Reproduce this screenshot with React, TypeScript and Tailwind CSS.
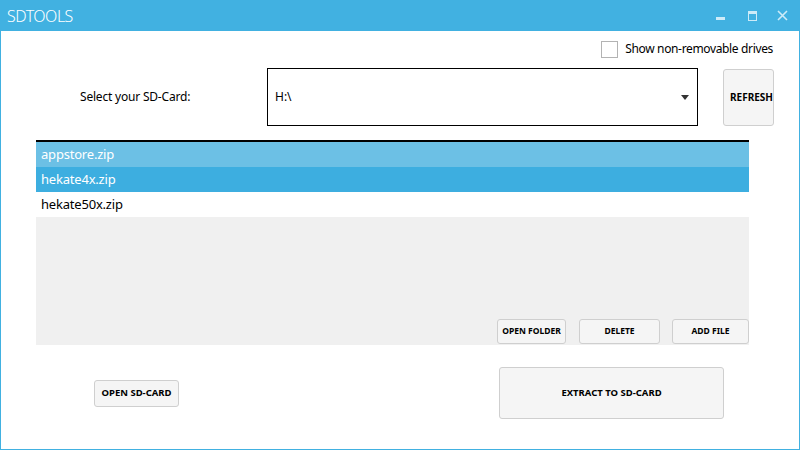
import React from "react";

const files = [
  { name: "appstore.zip", cls: "bg-[#6cc0e5] text-white" },
  { name: "hekate4x.zip", cls: "bg-[#3daee0] text-white" },
  { name: "hekate50x.zip", cls: "bg-white text-black" },
];

function SmallButton({ label, className }: { label: string; className: string }) {
  return (
    <button
      className={`flex items-center justify-center rounded-[3px] border border-[#cfcfcf] bg-[#f5f5f5] text-[8.5px] font-bold text-black ${className}`}
    >
      {label}
    </button>
  );
}

export default function App() {
  return (
    <div
      className="flex h-[450px] w-[800px] flex-col border border-t-0 border-[#41b1e1] bg-white text-[12px] text-black"
      style={{ fontFamily: '"Noto Sans", "Open Sans", sans-serif' }}
    >
      {/* Title bar */}
      <div className="-mx-px flex h-[31px] shrink-0 items-center bg-[#41b1e1] pl-[7px] text-white">
        <span className="text-[16px] font-light tracking-[-0.5px]">SDTOOLS</span>
        <div className="ml-auto flex items-center">
          <div className="flex w-[32px] justify-center pt-[6px]">
            <div className="h-[3px] w-[9px] bg-[#cdebf8]" />
          </div>
          <div className="flex w-[32px] justify-center">
            <div className="h-[10px] w-[9px] border border-t-[3px] border-[#cdebf8]" />
          </div>
          <div className="flex w-[32px] justify-center pr-[4px]">
            <svg width="11" height="11" viewBox="0 0 11 11">
              <path d="M1 1 L10 10 M10 1 L1 10" stroke="#cdebf8" strokeWidth="1.6" />
            </svg>
          </div>
        </div>
      </div>

      {/* Checkbox row */}
      <div className="mt-[9px] flex items-center justify-end pr-[26px]">
        <div className="h-[17px] w-[17px] border border-[#b3b3b3] bg-white" />
        <span className="ml-[7px] tracking-[-0.35px]">Show non-removable drives</span>
      </div>

      {/* SD card select row */}
      <div className="mt-[10px] flex h-[58px] items-center">
        <span className="ml-[79px] w-[187px] tracking-[-0.2px]">Select your SD-Card:</span>
        <div className="flex h-[58px] w-[431px] items-center border-[1.5px] border-black pl-[7px] pr-[8px]">
          <span>H:\</span>
          <svg className="ml-auto" width="8" height="5" viewBox="0 0 8 5">
            <path d="M0 0 H8 L4 5 Z" fill="#333" />
          </svg>
        </div>
        <button className="ml-[25px] flex h-[57px] w-[51px] items-center overflow-hidden rounded-[3px] border border-[#cfcfcf] bg-[#f5f5f5] pl-[6px] text-[10px] font-bold">
          <span className="whitespace-nowrap">REFRESH</span>
        </button>
      </div>

      {/* File list */}
      <div className="ml-[35px] mt-[14px] flex h-[205px] w-[713px] flex-col border-t-2 border-black bg-[#f0f0f0]">
        {files.map((f) => (
          <div key={f.name} className={`flex h-[25px] items-center pl-[5px] text-[13px] tracking-[-0.2px] ${f.cls}`}>
            {f.name}
          </div>
        ))}
        <div className="mt-auto mb-px flex justify-end">
          <SmallButton label="OPEN FOLDER" className="h-[25px] w-[69px]" />
          <SmallButton label="DELETE" className="ml-[13px] h-[25px] w-[81px]" />
          <SmallButton label="ADD FILE" className="ml-[12px] h-[25px] w-[77px]" />
        </div>
      </div>

      {/* Bottom buttons */}
      <div className="mt-[22px] flex items-center">
        <button className="ml-[93px] flex h-[27px] w-[85px] items-center justify-center rounded-[3px] border border-[#cfcfcf] bg-[#f5f5f5] text-[9.5px] font-bold">
          OPEN SD-CARD
        </button>
        <button className="ml-[320px] flex h-[52px] w-[225px] items-center justify-center rounded-[3px] border border-[#cfcfcf] bg-[#f5f5f5] text-[9.5px] font-bold">
          EXTRACT TO SD-CARD
        </button>
      </div>
    </div>
  );
}
